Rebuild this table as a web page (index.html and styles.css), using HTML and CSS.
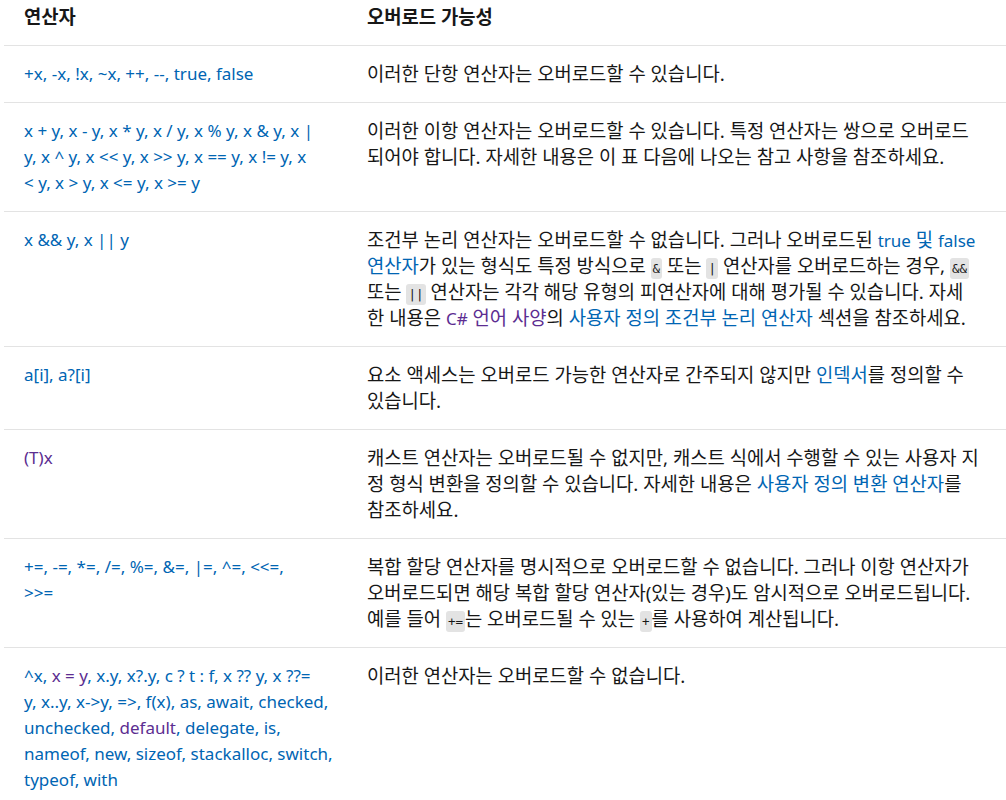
FILE: index.html
```html
<!DOCTYPE html>
<html lang="ko">
<head>
<meta charset="utf-8">
<title>연산자 오버로드 가능성</title>
<link rel="stylesheet" href="styles.css">
</head>
<body>
<div class="wrap">
<table class="ops">
  <colgroup><col class="c1"><col class="c2"></colgroup>
  <thead>
    <tr><th>연산자</th><th>오버로드 가능성</th></tr>
  </thead>
  <tbody>
    <tr>
      <td class="op">+x, -x, !x, ~x, ++, --, true, false</td>
      <td class="ko">이러한 단항 연산자는 오버로드할 수 있습니다.</td>
    </tr>
    <tr>
      <td class="op">x + y, x - y, x * y, x / y, x % y, x &amp; y, x |<br>y, x ^ y, x &lt;&lt; y, x &gt;&gt; y, x == y, x != y, x<br>&lt; y, x &gt; y, x &lt;= y, x &gt;= y</td>
      <td class="ko">이러한 이항 연산자는 오버로드할 수 있습니다. 특정 연산자는 쌍으로 오버로드<br>되어야 합니다. 자세한 내용은 이 표 다음에 나오는 참고 사항을 참조하세요.</td>
    </tr>
    <tr>
      <td class="op">x &amp;&amp; y, x || y</td>
      <td class="ko">조건부 논리 연산자는 오버로드할 수 없습니다. 그러나 오버로드된 <a class="link"><span class="lat">true</span> 및 <span class="lat">false</span><br>연산자</a>가 있는 형식도 특정 방식으로 <code>&amp;</code> 또는 <code>|</code> 연산자를 오버로드하는 경우, <code>&amp;&amp;</code><br>또는 <code>||</code> 연산자는 각각 해당 유형의 피연산자에 대해 평가될 수 있습니다. 자세<br>한 내용은 <a class="visited"><span class="lat">C#</span> 언어 사양</a>의 <a class="link">사용자 정의 조건부 논리 연산자</a> 섹션을 참조하세요.</td>
    </tr>
    <tr>
      <td class="op">a[i], a?[i]</td>
      <td class="ko">요소 액세스는 오버로드 가능한 연산자로 간주되지 않지만 <a class="link">인덱서</a>를 정의할 수<br>있습니다.</td>
    </tr>
    <tr>
      <td class="op"><span class="visited">(T)x</span></td>
      <td class="ko">캐스트 연산자는 오버로드될 수 없지만, 캐스트 식에서 수행할 수 있는 사용자 지<br>정 형식 변환을 정의할 수 있습니다. 자세한 내용은 <a class="link">사용자 정의 변환 연산자</a>를<br>참조하세요.</td>
    </tr>
    <tr>
      <td class="op">+=, -=, *=, /=, %=, &amp;=, |=, ^=, &lt;&lt;=,<br>&gt;&gt;=</td>
      <td class="ko">복합 할당 연산자를 명시적으로 오버로드할 수 없습니다. 그러나 이항 연산자가<br>오버로드되면 해당 복합 할당 연산자(있는 경우)도 암시적으로 오버로드됩니다.<br>예를 들어 <code>+=</code>는 오버로드될 수 있는 <code>+</code>를 사용하여 계산됩니다.</td>
    </tr>
    <tr>
      <td class="op">^x, <span class="visited">x = y</span>, x.y, x?.y, c ? t : f, x ?? y, x ??=<br>y, x..y, x-&gt;y, =&gt;, f(x), as, await, checked,<br>unchecked, <span class="visited">default</span>, delegate, is,<br>nameof, new, sizeof, stackalloc, switch,<br>typeof, with</td>
      <td class="ko">이러한 연산자는 오버로드할 수 없습니다.</td>
    </tr>
  </tbody>
</table>
</div>
</body>
</html>
```

FILE: styles.css
```css
html, body {
  margin: 0;
  padding: 0;
  background: #ffffff;
}

body {
  font-family: "Noto Sans", "Noto Sans CJK KR", sans-serif;
  font-size: 17px;
  line-height: 26px;
  color: #171717;
  overflow: hidden;
}

.wrap {
  padding-left: 4px;
}

.ops {
  border-collapse: collapse;
  table-layout: fixed;
  width: 1002px;
}

.c1 { width: 343px; }

.ops th {
  text-align: left;
  font-weight: 700;
  font-size: 18.8px;
  padding: 4px 20px 15px 20px;
  border-bottom: 1px solid #e3e3e3;
  vertical-align: top;
}

.ops td {
  padding: 15px 20px 15px 20px;
  border-top: 1px solid #e3e3e3;
  vertical-align: top;
  white-space: nowrap;
}

.ops td.op {
  color: #0065b3;
}

.ops td.ko {
  font-size: 18.8px;
}

.lat {
  font-size: 17px;
  line-height: 1;
}

.link { color: #0065b3; }
.visited { color: #5c2d91; }

code {
  font-family: "DejaVu Sans Mono", monospace;
  font-size: 12.5px;
  line-height: 1;
  background: #e3e3e3;
  color: #171717;
  border-radius: 3px;
  padding: 3px 2px;
}
```
